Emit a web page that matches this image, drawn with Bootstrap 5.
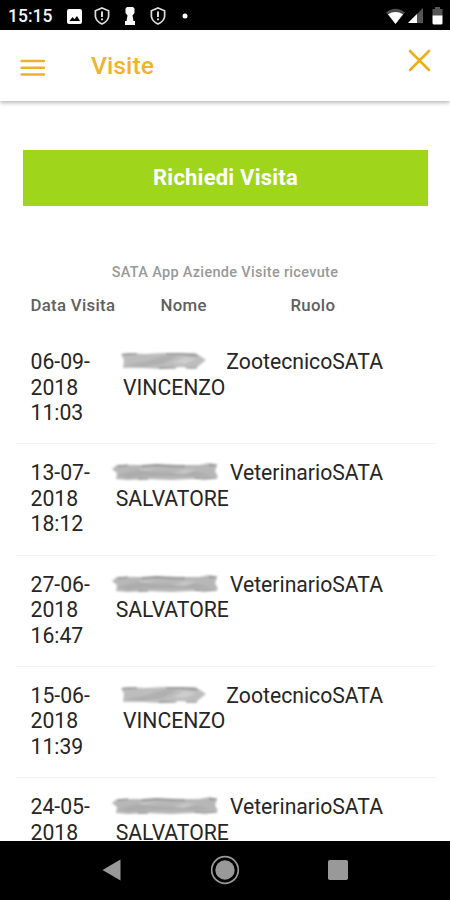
<!DOCTYPE html>
<html lang="it">
<head>
<meta charset="utf-8">
<meta name="viewport" content="width=device-width, initial-scale=1">
<title>Visite</title>
<link rel="stylesheet" href="https://cdn.jsdelivr.net/npm/bootstrap@5.3.0/dist/css/bootstrap.min.css">
<style>
body{font-family:Roboto,sans-serif;color:#262626;background:#fff}
svg{display:block;flex:none}
.screen{width:450px;height:900px}
.status{height:30px;background:#000;color:#f4f4f4;padding:2px 7px 0 8px;font-size:17.5px;font-weight:500}
.status-icons{margin-left:14px}
.icon-shield-first{margin-left:9px}
.icon-key{margin-left:11px}
.icon-shield{margin-left:10.5px}
.icon-dot{margin-left:14px}
.icon-signal{margin-left:3px}
.icon-battery{margin-left:8px}
.appbar{height:70.5px;padding:0 19.5px 0 20px;box-shadow:0 2px 4px rgba(0,0,0,.27);z-index:1}
.title{color:#efb42c;font-size:24.8px;font-weight:500;line-height:30px;margin-left:45px;padding-top:1px}
.menu-icon{margin-top:6px}
.close-icon{margin-bottom:10px}
.ask{margin:49px 22px 0 23px;height:56px;background:#9fd51b;color:#fff;font-size:22px;letter-spacing:.22px;font-weight:700;line-height:56px}
.ask:hover{background:#93c719;color:#fff}
.caption-line{margin-top:57px;color:#999;font-size:14.5px;letter-spacing:.31px;font-weight:500;line-height:20px}
.heads{margin:10.5px 0 0 30.5px;color:#606060;font-size:16.8px;letter-spacing:.3px;font-weight:500;line-height:24px}
.head-date{width:130px}
.head-name{width:130px}
.visits{margin:16.2px 14px 0 16px}
.visit{height:111.25px;padding:16px 53px 0 14.5px;border-bottom:1px solid #f3f3f3;font-size:21.2px;line-height:25.5px}
.visit-date{width:66px}
.visit-name{margin-right:1px}
.smudge{height:25.5px}
.smudge svg{overflow:visible}
.navbar-keys{height:59.5px;background:#000}
.key-slot{width:113px}
</style>
</head>
<body>
<svg width="0" height="0" class="position-absolute" aria-hidden="true">
<defs>
<filter id="soft" x="-10%" y="-30%" width="120%" height="160%"><feGaussianBlur stdDeviation="1.1"/></filter>
<g id="smudge-short" filter="url(#soft)">
<path d="M-2 5 L6 4 L22 5 L40 4 L58 4 L72 4 L77 7 L83 11 L78 15 L73 19 L57 18 L38 20 L20 19 L0 19 L1 11Z" fill="#bdbdbd"/>
<path d="M2 16 L25 12 L40 7 L55 7 L40 15 L20 18Z" fill="#b0b0b0"/>
<path d="M49 14 L62 8 L73 10 L62 15Z" fill="#cdcdcd"/>
<path d="M-1 5.5 L14 5 M43 5 L59 5 L75 6.5 M36 19 L53 19 M63 19 L74 19" fill="none" stroke="#777" stroke-width="1.2"/>
</g>
<g id="smudge-long" filter="url(#soft)">
<path d="M-4 9 L1 5 L25 5 L42 4 L64 5 L83 5 L94 3 L101 5 L99 11 L102 17 L90 19 L75 19 L55 20 L31 19 L12 20 L0 19 L1 13Z" fill="#b7b7b7"/>
<path d="M2 15 L22 10 L34 12 L58 13 L73 10 L94 15 L76 16 L51 16 L28 16 L12 18Z" fill="#acacac"/>
<path d="M20 9 L42 8 L29 11Z M57 13 L69 9 L81 10 L69 14Z" fill="#c6c6c6"/>
<path d="M2 6 L12 5 M26 6 L40 5 L55 6 L69 6 M93 5 L101 5 M22 19 L32 19 M79 18 L88 19 L101 18" fill="none" stroke="#747474" stroke-width="1.2"/>
</g>
<g id="shield" fill="none" stroke="#ddd" stroke-width="1.7">
<path d="M8 1 L14.6 3.7 V9.6 Q13.7 14.4 8 17 Q2.3 14.4 1.4 9.6 V3.7Z"/>
<path d="M8 4.5V10M8 11.5V13.3" stroke-width="2"/>
</g>
</defs>
</svg>
<div class="screen d-flex flex-column overflow-hidden">
<header class="status d-flex align-items-center flex-shrink-0">
<span>15:15</span>
<div class="status-icons d-flex align-items-center">
<svg width="17" height="17" viewBox="0 0 17 17"><rect x="1" y="1" width="15" height="15" rx="2" fill="#fff"/><path d="M3.5 13 L6.5 9 L8.5 11.3 L11 8 L14 13Z" fill="#000"/></svg>
<svg class="icon-shield-first" width="20" height="18" viewBox="-2 0 20 18"><use href="#shield"/></svg>
<svg class="icon-key" width="14" height="18" viewBox="1 0 14 18"><path d="M5 0H11L12.5 1.5V6L10.5 8.5L11.5 14H13V18H3V14H4.5L5.5 8.5L3.5 6V1.5Z" fill="#f8f8f8"/></svg>
<svg class="icon-shield" width="20" height="18" viewBox="-2 0 20 18"><use href="#shield"/></svg>
<svg class="icon-dot" width="6" height="6" viewBox="0 0 6 6"><circle cx="3" cy="3" r="2.5" fill="#fff"/></svg>
</div>
<div class="d-flex align-items-center ms-auto">
<svg width="19" height="17" viewBox="0 0 19 17"><path d="M0 4.5Q9.5-3 19 4.5L9.5 16Z" fill="#4d4d4d"/><path d="M2 6.3Q9.5 1.8 17 6.3L9.5 16Z" fill="#fff"/></svg>
<svg class="icon-signal" width="16" height="16" viewBox="0 0 16 16"><path d="M15 0V15H0Z" fill="#555"/><path d="M9 6V15H0Z" fill="#fff"/></svg>
<svg class="icon-battery" width="11" height="18" viewBox="0 0 11 18"><path d="M3 0H8V2H10.5V9H.5V2H3Z" fill="#555"/><path d="M.5 8.5H10.5V16Q10.5 17.5 9 17.5H2Q.5 17.5 .5 16Z" fill="#fff"/></svg>
</div>
</header>
<nav class="appbar d-flex align-items-center flex-shrink-0 position-relative bg-white">
<svg class="menu-icon" width="26" height="20" viewBox="0 0 26 20" role="img" aria-label="Menu"><path d="M1.5 3H24M1.5 9.8H24M1.5 16.5H24" stroke="#ebb22d" stroke-width="2.4" stroke-linecap="round"/></svg>
<span class="title">Visite</span>
<svg class="close-icon ms-auto" width="23" height="23" viewBox="0 0 23 23" role="img" aria-label="Chiudi"><path d="M2 2L21 21M21 2L2 21" stroke="#edae18" stroke-width="2.6" stroke-linecap="round"/></svg>
</nav>
<main class="flex-grow-1 overflow-hidden d-flex flex-column">
<button class="btn ask rounded-0 border-0 p-0 flex-shrink-0" type="button">Richiedi Visita</button>
<div class="caption-line text-center flex-shrink-0">SATA App Aziende Visite ricevute</div>
<div class="heads d-flex flex-shrink-0"><span class="head-date">Data Visita</span><span class="head-name">Nome</span><span>Ruolo</span></div>
<div class="visits flex-shrink-0">
<div class="visit d-flex"><div class="visit-date">06-09-<br>2018<br>11:03</div><div class="visit-name ms-auto"><div class="smudge"><svg width="84" height="25" viewBox="0 0 84 25"><use href="#smudge-short"/></svg></div>VINCENZO</div><div>ZootecnicoSATA</div></div>
<div class="visit d-flex"><div class="visit-date">13-07-<br>2018<br>18:12</div><div class="visit-name ms-auto"><div class="smudge"><svg width="102" height="25" viewBox="0 0 102 25"><use href="#smudge-long"/></svg></div>SALVATORE</div><div>VeterinarioSATA</div></div>
<div class="visit d-flex"><div class="visit-date">27-06-<br>2018<br>16:47</div><div class="visit-name ms-auto"><div class="smudge"><svg width="102" height="25" viewBox="0 0 102 25"><use href="#smudge-long"/></svg></div>SALVATORE</div><div>VeterinarioSATA</div></div>
<div class="visit d-flex"><div class="visit-date">15-06-<br>2018<br>11:39</div><div class="visit-name ms-auto"><div class="smudge"><svg width="84" height="25" viewBox="0 0 84 25"><use href="#smudge-short"/></svg></div>VINCENZO</div><div>ZootecnicoSATA</div></div>
<div class="visit d-flex"><div class="visit-date">24-05-<br>2018</div><div class="visit-name ms-auto"><div class="smudge"><svg width="102" height="25" viewBox="0 0 102 25"><use href="#smudge-long"/></svg></div>SALVATORE</div><div>VeterinarioSATA</div></div>
</div>
</main>
<footer class="navbar-keys d-flex justify-content-center align-items-center flex-shrink-0">
<div class="key-slot d-flex justify-content-center"><svg width="20" height="22" viewBox="0 0 20 22"><path d="M.5 11L18.5 .5V21.5Z" fill="#999"/></svg></div>
<div class="key-slot d-flex justify-content-center"><svg width="30" height="30" viewBox="0 0 30 30"><circle cx="15" cy="15" r="13.3" fill="none" stroke="#999" stroke-width="1.7"/><circle cx="15" cy="15" r="9.7" fill="#999"/></svg></div>
<div class="key-slot d-flex justify-content-center"><svg width="20" height="20" viewBox="0 0 20 20"><rect width="20" height="20" rx="1.8" fill="#999"/></svg></div>
</footer>
</div>
<script src="https://cdn.jsdelivr.net/npm/bootstrap@5.3.0/dist/js/bootstrap.bundle.min.js"></script>
</body>
</html>
